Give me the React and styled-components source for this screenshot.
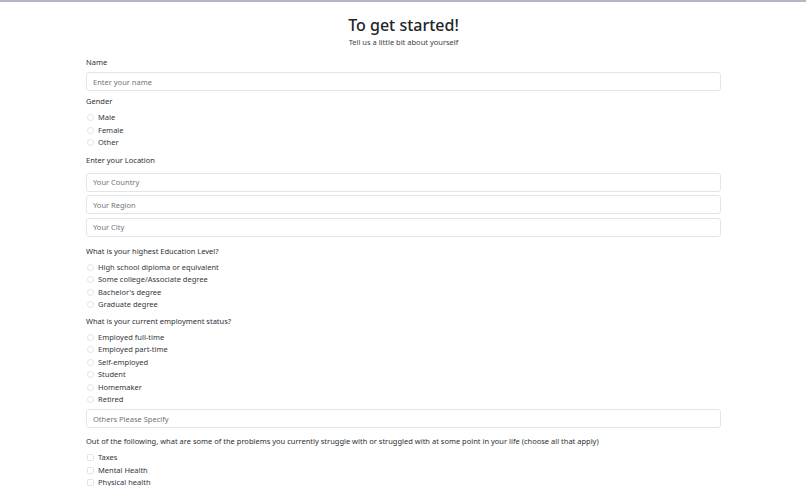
import React from 'react';
import styled, { createGlobalStyle } from 'styled-components';

const GlobalStyle = createGlobalStyle`
  html, body {
    margin: 0;
    padding: 0;
    background: #ffffff;
  }
  body {
    font-family: "Noto Sans", "Open Sans", sans-serif;
    color: #212529;
    font-size: 8px;
    line-height: 1.5;
  }
  * { box-sizing: border-box; }
`;

const Page = styled.div`
  min-height: 486px;
  border-top: 2px solid #bdb0c9;
  padding: 14px 85px 0 86px;
`;

const Header = styled.header`
  text-align: center;
  margin-bottom: 8px;
`;

const Title = styled.h1`
  margin: 0;
  font-size: 16px;
  font-weight: 500;
  line-height: 1.2;
  color: #212529;
`;

const Subtitle = styled.p`
  margin: 2px 0 0;
  font-size: 7.5px;
  color: #3d4146;
`;

const Field = styled.div`
  margin-bottom: ${p => p.$mb ?? 3}px;
`;

const Label = styled.div`
  font-size: 7.5px;
  line-height: 12px;
  margin-bottom: ${p => p.$mb ?? 4}px;
  color: #2b2f33;
`;

const Input = styled.input`
  display: block;
  width: 100%;
  height: 19px;
  padding: 0 6px;
  font-family: inherit;
  font-size: 7.5px;
  color: #212529;
  background: #fff;
  border: 1px solid #e3e6e9;
  border-radius: 3px;
  margin-top: ${p => p.$mt ?? 0}px;
  margin-bottom: ${p => p.$mb ?? 0}px;
  outline: none;
  &::placeholder { color: #6f757b; }
`;

const Options = styled.div`
  display: flex;
  flex-direction: column;
`;

const Option = styled.label`
  display: flex;
  align-items: center;
  gap: 4px;
  height: 12.5px;
  font-size: 7.5px;
  color: #33373b;
`;

const Mark = styled.span`
  width: 7px;
  height: 7px;
  margin-left: 1px;
  border: 1px solid #e0e3e6;
  border-radius: ${p => (p.$square ? '1.5px' : '50%')};
  background: #fff;
  flex: none;
`;

const ChoiceList = ({ items, square }) => (
  <Options>
    {items.map(item => (
      <Option key={item}>
        <Mark $square={square} />
        {item}
      </Option>
    ))}
  </Options>
);

const App = () => (
  <>
    <GlobalStyle />
    <Page>
      <Header>
        <Title>To get started!</Title>
        <Subtitle>Tell us a little bit about yourself</Subtitle>
      </Header>

      <Field $mb={4}>
        <Label>Name</Label>
        <Input placeholder="Enter your name" />
      </Field>

      <Field $mb={5}>
        <Label>Gender</Label>
        <ChoiceList items={['Male', 'Female', 'Other']} />
      </Field>

      <Field $mb={8}>
        <Label $mb={7}>Enter your Location</Label>
        <Input placeholder="Your Country" $mb={3.5} />
        <Input placeholder="Your Region" $mb={3.5} />
        <Input placeholder="Your City" />
      </Field>

      <Field $mb={4}>
        <Label>What is your highest Education Level?</Label>
        <ChoiceList
          items={[
            'High school diploma or equivalent',
            'Some college/Associate degree',
            "Bachelor's degree",
            'Graduate degree',
          ]}
        />
      </Field>

      <Field $mb={7}>
        <Label>What is your current employment status?</Label>
        <ChoiceList
          items={[
            'Employed full-time',
            'Employed part-time',
            'Self-employed',
            'Student',
            'Homemaker',
            'Retired',
          ]}
        />
        <Input placeholder="Others Please Specify" $mt={3.5} />
      </Field>

      <Field>
        <Label>
          Out of the following, what are some of the problems you currently struggle with or
          struggled with at some point in your life (choose all that apply)
        </Label>
        <ChoiceList square items={['Taxes', 'Mental Health', 'Physical health', 'Finances']} />
      </Field>
    </Page>
  </>
);

export default App;
